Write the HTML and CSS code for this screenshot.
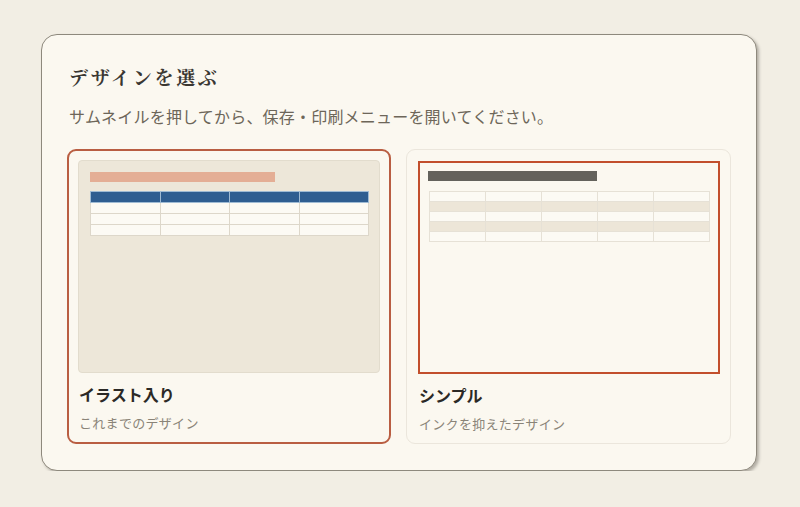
FILE: index.html
```html
<!DOCTYPE html>
<html lang="ja">
<head>
  <meta charset="UTF-8" />
  <meta name="viewport" content="width=device-width, initial-scale=1.0"/>
  <title>デザインを選ぶ</title>
  <link rel="stylesheet" href="styles.css">
</head>
<body>
  <div class="panel">
    <h1>デザインを選ぶ</h1>
    <p class="lead">サムネイルを押してから、保存・印刷メニューを開いてください。</p>

    <div class="choices">
      <!-- illustrated design (current) -->
      <div class="choice selected">
        <div class="thumb thumb-illust">
          <div class="bar"></div>
          <table class="mini">
            <tr class="head"><td></td><td></td><td></td><td></td></tr>
            <tr><td></td><td></td><td></td><td></td></tr>
            <tr><td></td><td></td><td></td><td></td></tr>
            <tr><td></td><td></td><td></td><td></td></tr>
          </table>
        </div>
        <div class="choice-name">イラスト入り</div>
        <div class="choice-note">これまでのデザイン</div>
      </div>

      <!-- low-ink design -->
      <div class="choice">
        <div class="thumb thumb-simple">
          <div class="bar"></div>
          <table class="mini">
            <tr><td></td><td></td><td></td><td></td><td></td></tr>
            <tr class="shade"><td></td><td></td><td></td><td></td><td></td></tr>
            <tr><td></td><td></td><td></td><td></td><td></td></tr>
            <tr class="shade"><td></td><td></td><td></td><td></td><td></td></tr>
            <tr><td></td><td></td><td></td><td></td><td></td></tr>
          </table>
        </div>
        <div class="choice-name">シンプル</div>
        <div class="choice-note">インクを抑えたデザイン</div>
      </div>
    </div>
  </div>
</body>
</html>
```

FILE: styles.css
```css
* {
  margin: 0;
  padding: 0;
  box-sizing: border-box;
}

body {
  background-color: #f2eee4;
  font-family: 'Noto Sans CJK JP', 'Noto Sans', sans-serif;
  padding: 34px 0 0 41px;
}

.panel {
  width: 716px;
  height: 437px;
  background-color: #fbf8f0;
  border: 1px solid #8e897d;
  border-radius: 16px;
  box-shadow: 2px 2px 3px rgba(60, 55, 45, 0.35);
  padding: 28px 25px 0 25px;
}

h1 {
  font-family: 'Noto Serif CJK JP', 'IPAexMincho', 'Noto Sans CJK JP', serif;
  font-size: 19px;
  font-weight: 700;
  letter-spacing: 2.7px;
  color: #3a3732;
  line-height: 28px;
  margin-left: 2px;
}

.lead {
  font-size: 16px;
  color: #6d6659;
  line-height: 24px;
  margin: 13px 0 0 2px;
  letter-spacing: 0.2px;
}

.choices {
  display: flex;
  gap: 15px;
  margin-top: 21px;
}

.choice {
  width: 325px;
  height: 295px;
  border: 1px solid #ebe6dc;
  border-radius: 9px;
  padding: 10px 10px 0 11px;
}

.choice.selected {
  border: 2px solid #b95e42;
  padding: 9px 9px 0 9px;
}

.thumb {
  width: 302px;
  height: 213px;
  padding: 11px 11px 0 11px;
}

.thumb-illust {
  background-color: #ede7d9;
  border: 1px solid #e2dccd;
  border-radius: 4px;
}

.thumb-simple {
  background-color: #fbf8f0;
  border: 2px solid #c24f2c;
  margin-top: 1px;
  padding: 8px 9px 0 8px;
}

.bar {
  height: 10px;
}

.thumb-illust .bar {
  width: 185px;
  background-color: #e4ae95;
}

.thumb-simple .bar {
  width: 169px;
  background-color: #64625c;
}

.mini {
  width: 100%;
  border-collapse: collapse;
}

.mini td {
  border: 1px solid #ddd7ca;
  background-color: #fcfaf4;
}

.thumb-illust .mini {
  width: 279px;
  margin-top: 9px;
}

.thumb-illust .mini td {
  height: 11px;
}

.thumb-illust .mini .head td {
  background-color: #2f5e91;
  border-color: #9fbbd4;
}

.thumb-simple .mini {
  width: 281px;
  margin-top: 10px;
  margin-left: 1px;
}

.thumb-simple .mini td {
  height: 10px;
  border-color: #e6e1d6;
}

.thumb-simple .mini .shade td {
  background-color: #ede6d8;
}

.choice-name {
  font-size: 16px;
  font-weight: 700;
  color: #2b2926;
  line-height: 22px;
  margin-top: 10px;
  margin-left: 1px;
}

.choice-note {
  font-size: 13px;
  color: #8a8478;
  line-height: 20px;
  margin-top: 8px;
  margin-left: 1px;
  letter-spacing: 0.3px;
}
```
